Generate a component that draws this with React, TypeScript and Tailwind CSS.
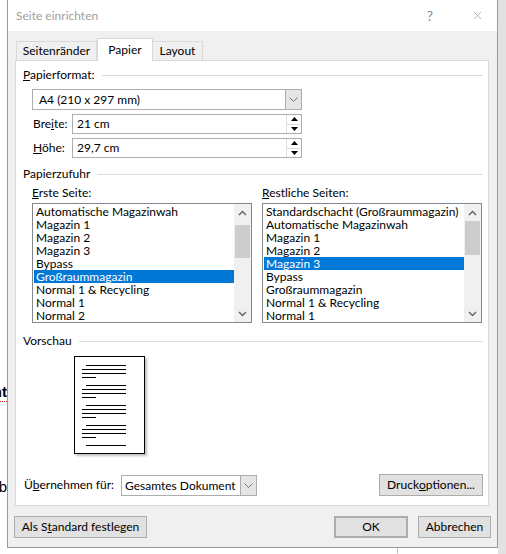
import React from 'react';
import { X } from 'lucide-react';

const erste = [
  'Automatische Magazinwah',
  'Magazin 1',
  'Magazin 2',
  'Magazin 3',
  'Bypass',
  'Großraummagazin',
  'Normal 1 & Recycling',
  'Normal 1',
  'Normal 2',
];

const restliche = [
  'Standardschacht (Großraummagazin)',
  'Automatische Magazinwah',
  'Magazin 1',
  'Magazin 2',
  'Magazin 3',
  'Bypass',
  'Großraummagazin',
  'Normal 1 & Recycling',
  'Normal 1',
];

const Chevron: React.FC<{ up?: boolean }> = ({ up }) => (
  <svg width="9" height="6" viewBox="0 0 9 6" className="block">
    <path
      d={up ? 'M1 5 L4.5 1.5 L8 5' : 'M1 1 L4.5 4.5 L8 1'}
      fill="none"
      stroke="#606060"
      strokeWidth="1.4"
    />
  </svg>
);

const SectionHeader: React.FC<{ children: React.ReactNode; className?: string }> = ({ children, className }) => (
  <div className={`flex items-center h-4 ml-[7px] mr-[5px] ${className ?? ''}`}>
    <span className="leading-4 whitespace-nowrap">{children}</span>
    <div className="flex-1 h-px bg-[#dcdcdc] ml-[7px]" />
  </div>
);

const DropButton: React.FC = () => (
  <div className="w-[16px] h-full bg-[#e5e5e5] border-l border-[#acacac] flex items-center justify-center">
    <svg width="9" height="5" viewBox="0 0 9 5">
      <path d="M0.5 0.5 L4.5 4.5 L8.5 0.5" fill="none" stroke="#707070" strokeWidth="1" />
    </svg>
  </div>
);

const Spinner: React.FC = () => (
  <div className="w-[15px] h-full flex flex-col border-l border-[#dcdcdc]">
    <div className="flex-1 flex items-center justify-center border-b border-[#dcdcdc]">
      <svg width="7" height="4" viewBox="0 0 7 4">
        <path d="M0 4 L3.5 0 L7 4 Z" fill="#000" />
      </svg>
    </div>
    <div className="flex-1 flex items-center justify-center">
      <svg width="7" height="4" viewBox="0 0 7 4">
        <path d="M0 0 L3.5 4 L7 0 Z" fill="#000" />
      </svg>
    </div>
  </div>
);

const ListBox: React.FC<{ items: string[]; selected: number; thumbTop: string; thumbH: string }> = ({
  items,
  selected,
  thumbTop,
  thumbH,
}) => (
  <div className="w-[220px] h-[120px] border border-[#828790] bg-white flex">
    <div className="flex-1 pt-px pl-px overflow-hidden">
      {items.map((it, i) => (
        <div
          key={it}
          className={`h-[13px] leading-[13px] pl-[2px] whitespace-nowrap ${
            i === selected ? 'bg-[#0078d7] text-white' : ''
          }`}
        >
          {it}
        </div>
      ))}
    </div>
    <div className="w-[17px] bg-[#f0f0f0] flex flex-col">
      <div className="h-[17px] flex items-center justify-center">
        <Chevron up />
      </div>
      <div className={`${thumbTop} ${thumbH} mx-px bg-[#cdcdcd]`} />
      <div className="flex-1" />
      <div className="h-[17px] flex items-center justify-center">
        <Chevron />
      </div>
    </div>
  </div>
);

const PagePreview: React.FC = () => {
  const groups = [0, 20, 40, 60];
  return (
    <div className="w-[71px] h-[98px] border border-black bg-white shadow-[2px_2px_2px_rgba(0,0,0,0.25)]">
      <svg width="69" height="96" viewBox="0 0 69 96" className="block">
        {groups.map((g) => (
          <g key={g} stroke="#000" strokeWidth="1">
            <line x1="11" x2="51" y1={8.5 + g} y2={8.5 + g} />
            <line x1="7" x2="51" y1={12.5 + g} y2={12.5 + g} />
            <line x1="7" x2="51" y1={16.5 + g} y2={16.5 + g} />
            <line x1="7" x2="21" y1={20.5 + g} y2={20.5 + g} />
          </g>
        ))}
        <line x1="11" x2="51" y1="88.5" y2="88.5" stroke="#000" strokeWidth="1" />
      </svg>
    </div>
  );
};

const Button: React.FC<{ children: React.ReactNode; className?: string }> = ({ children, className }) => (
  <div
    className={`h-[22px] flex items-center justify-center whitespace-nowrap bg-[#e1e1e1] border border-[#adadad] ${className ?? ''}`}
  >
    {children}
  </div>
);

export default function App() {
  return (
    <div className="w-[506px] h-[554px] flex bg-white overflow-hidden text-[12px] leading-4 text-black font-['Lato',sans-serif]">
      <div className="w-[498px] flex flex-col">
        <div className="flex h-[548px]">
          {/* document behind the dialog */}
          <div className="w-[7px] flex flex-col items-end overflow-hidden font-['Liberation_Sans',sans-serif] text-[15px]">
            <div className="mt-[383px] whitespace-nowrap leading-[18px] font-bold flex justify-end">
              <span className="border-b border-dotted border-[#e03030]">nt</span>
            </div>
            <div className="mt-[76px] whitespace-nowrap leading-[18px] flex justify-end">b</div>
          </div>

          {/* dialog */}
          <div className="w-[491px] flex flex-col border-l border-r border-b border-[#9a9a9a] bg-[#f0f0f0]">
            <div className="h-[31px] bg-white flex items-center pl-[8px] text-[#a0a0a0]">
              <span className="flex-1">Seite einrichten</span>
              <span className="text-[14px] text-[#888] mr-[38px]">?</span>
              <X size={13} strokeWidth={1} color="#777" className="mr-[13px]" />
            </div>

            <div className="pt-[7px] px-[7px]">
              <div className="flex items-end h-[22px] pl-px">
                <div className="w-[81px] h-[19px] border border-b-0 border-[#d9d9d9] flex items-center justify-center">
                  Seitenränder
                </div>
                <div className="w-[56px] h-[23px] -mb-px relative z-10 bg-white border border-b-0 border-[#d9d9d9] flex items-center justify-center">
                  Papier
                </div>
                <div className="w-[50px] h-[19px] border border-b-0 border-l-0 border-[#d9d9d9] flex items-center justify-center">
                  Layout
                </div>
              </div>

              <div className="w-[474px] h-[446px] bg-white border border-[#d9d9d9] flex flex-col">
                <SectionHeader className="mt-[6px]">
                  <u>P</u>apierformat:
                </SectionHeader>

                <div className="mt-[6px] ml-[16px] w-[270px] h-[21px] border border-[#adadad] flex">
                  <div className="flex-1 pl-[6px] leading-[19px]">A4 (210 x 297 mm)</div>
                  <DropButton />
                </div>

                <div className="mt-[4px] ml-[17px] flex items-center h-[20px]">
                  <span className="w-[39px] whitespace-nowrap">
                    Bre<u>i</u>te:
                  </span>
                  <div className="w-[230px] h-[20px] border border-[#abadb3] flex">
                    <div className="flex-1 pl-[4px] leading-[18px]">21 cm</div>
                    <Spinner />
                  </div>
                </div>

                <div className="mt-[4px] ml-[17px] flex items-center h-[20px]">
                  <span className="w-[39px] whitespace-nowrap">
                    <u>H</u>öhe:
                  </span>
                  <div className="w-[230px] h-[20px] border border-[#abadb3] flex">
                    <div className="flex-1 pl-[4px] leading-[18px]">29,7 cm</div>
                    <Spinner />
                  </div>
                </div>

                <SectionHeader className="mt-[8px]">Papierzufuhr</SectionHeader>

                <div className="flex gap-[10px] ml-[16px] mt-[3px]">
                  <div className="flex flex-col">
                    <div className="h-4 leading-4">
                      <u>E</u>rste Seite:
                    </div>
                    <div className="mt-[2px]">
                      <ListBox items={erste} selected={5} thumbTop="mt-[4px]" thumbH="h-[33px]" />
                    </div>
                  </div>
                  <div className="flex flex-col">
                    <div className="h-4 leading-4">
                      <u>R</u>estliche Seiten:
                    </div>
                    <div className="mt-[2px]">
                      <ListBox items={restliche} selected={4} thumbTop="mt-0" thumbH="h-[34px]" />
                    </div>
                  </div>
                </div>

                <SectionHeader className="mt-[10px]">Vorschau</SectionHeader>

                <div className="mt-[7px] ml-[58px]">
                  <PagePreview />
                </div>

                <div className="mt-[20px] ml-[8px] mr-[5px] flex items-center">
                  <span className="w-[97px] whitespace-nowrap">
                    Ü<u>b</u>ernehmen für:
                  </span>
                  <div className="w-[136px] h-[21px] border border-[#adadad] flex">
                    <div className="flex-1 pl-[3px] leading-[19px] whitespace-nowrap overflow-hidden">
                      Gesamtes Dokument
                    </div>
                    <DropButton />
                  </div>
                  <div className="flex-1" />
                  <Button className="w-[104px]">
                    Druck<u>o</u>ptionen...
                  </Button>
                </div>
              </div>
            </div>

            <div className="mt-[10px] flex items-center pl-[6px] pr-[6px]">
              <Button className="w-[133px]">
                Als S<u>t</u>andard festlegen
              </Button>
              <div className="flex-1" />
              <Button className="w-[74px] border-2 border-[#0078d7]">OK</Button>
              <Button className="w-[73px] ml-[10px]">Abbrechen</Button>
            </div>
          </div>
        </div>

        <div className="flex-1 flex">
          <div className="w-[397px]" />
          <div className="w-px bg-[#c8c8c8]" />
        </div>
      </div>
      <div className="flex-1 bg-[#e2e2e2]" />
    </div>
  );
}
